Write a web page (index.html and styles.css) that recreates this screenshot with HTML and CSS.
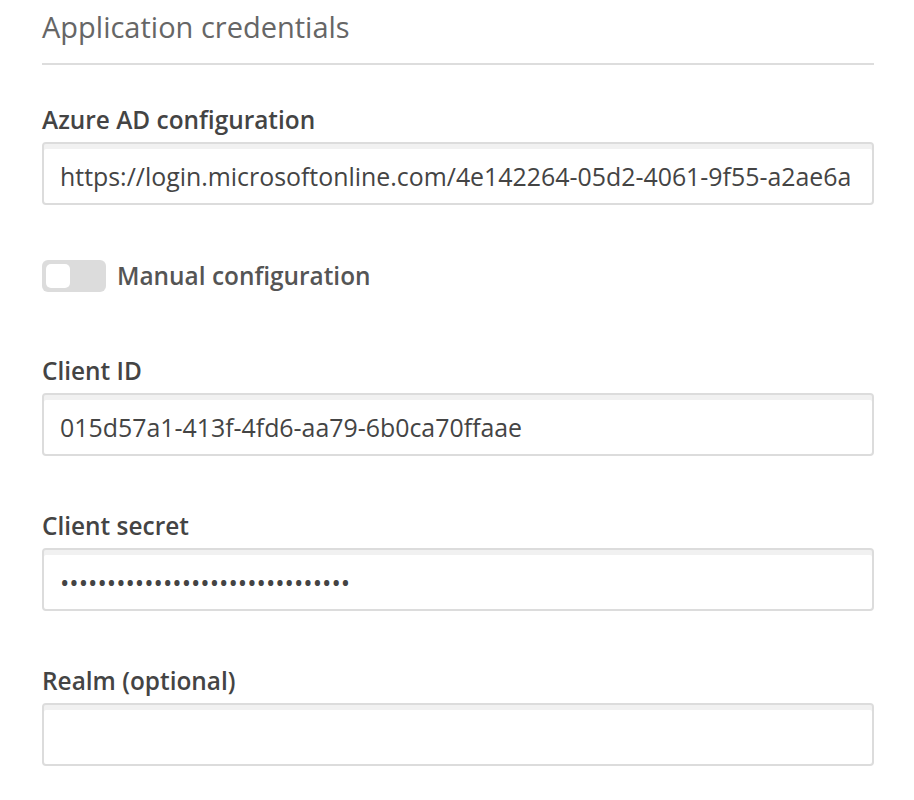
FILE: index.html
```html
<!DOCTYPE html>
<html lang="en">
<head>
<meta charset="utf-8">
<title>Application credentials</title>
<link rel="stylesheet" href="styles.css">
</head>
<body>
<section class="panel">
  <h2 class="panel-title">Application credentials</h2>
  <div class="field field-first">
    <label class="field-label" for="azure">Azure AD configuration</label>
    <input class="field-input" id="azure" type="text" readonly value="https://login.microsoftonline.com/4e142264-05d2-4061-9f55-a2ae6a">
  </div>
  <div class="toggle-row">
    <span class="toggle"><span class="toggle-knob"></span></span>
    <span class="toggle-label">Manual configuration</span>
  </div>
  <div class="field field-after-toggle">
    <label class="field-label" for="cid">Client ID</label>
    <input class="field-input" id="cid" type="text" readonly value="015d57a1-413f-4fd6-aa79-6b0ca70ffaae">
  </div>
  <div class="field">
    <label class="field-label" for="secret">Client secret</label>
    <input class="field-input" id="secret" type="password" readonly value="abcdefghijabcdefghijabcdefghija">
  </div>
  <div class="field">
    <label class="field-label" for="realm">Realm (optional)</label>
    <input class="field-input" id="realm" type="text" readonly value="">
  </div>
</section>
</body>
</html>
```

FILE: styles.css
```css
* { box-sizing: border-box; }
html, body { margin: 0; padding: 0; background: #fff; }
body {
  font-family: "Open Sans", "Noto Sans", sans-serif;
  color: #444;
}
.panel {
  width: 832px;
  margin-left: 42px;
  padding-top: 7px;
}
.panel-title {
  margin: 0;
  font-size: 29px;
  font-weight: 400;
  line-height: 40px;
  color: #666;
  padding-bottom: 16px;
  border-bottom: 2px solid #ddd;
}
.field {
  display: flex;
  flex-direction: column;
  margin-top: 55px;
}
.field-first { margin-top: 40px; }
.field-after-toggle { margin-top: 64px; }
.field-label {
  font-size: 24.4px;
  font-weight: 600;
  line-height: 30px;
  color: #444;
  margin-bottom: 7px;
}
.field-input {
  display: block;
  width: 100%;
  height: 63px;
  border: 2px solid #dcdcdc;
  border-radius: 4px;
  box-shadow: inset 0 5px 0 #f1f1f1;
  padding: 4px 16px 0;
  font-family: "Open Sans", "Noto Sans", sans-serif;
  font-size: 24.9px;
  color: #444;
  background: #fff;
  outline: none;
}
.toggle-row {
  display: flex;
  align-items: center;
  gap: 11px;
  height: 32px;
  margin-top: 55px;
}
.toggle {
  display: flex;
  align-items: center;
  flex: none;
  width: 64px;
  height: 32px;
  padding: 4px;
  border-radius: 6px;
  background: #dcdcdc;
}
.toggle-knob {
  width: 24px;
  height: 24px;
  border-radius: 5px;
  background: #fff;
}
.toggle-label {
  font-size: 24.4px;
  font-weight: 600;
  line-height: 30px;
  color: #555;
}
```
